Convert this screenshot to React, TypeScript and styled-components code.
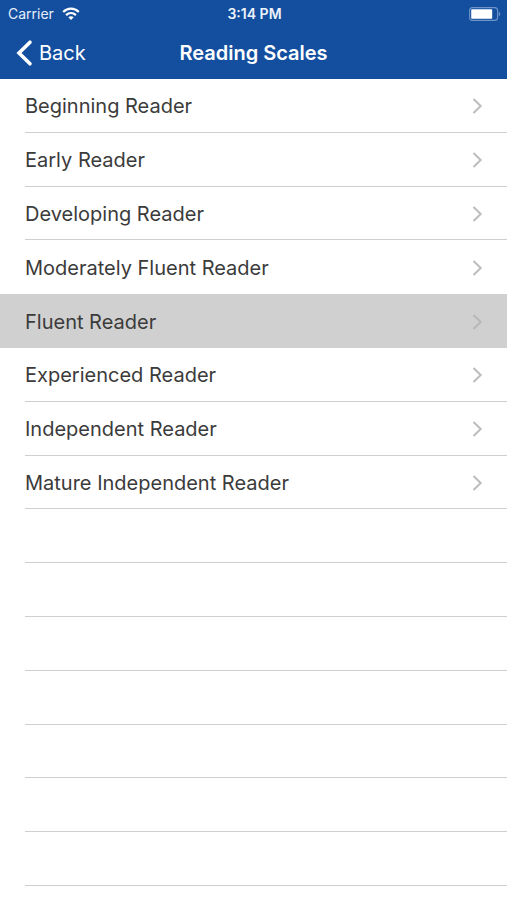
import React from "react";
import styled, { createGlobalStyle } from "styled-components";

const GlobalStyle = createGlobalStyle`
  *, *::before, *::after { box-sizing: border-box; }
  body { margin: 0; background: #fff; font-family: Inter, "Liberation Sans", sans-serif; }
`;

const Screen = styled.div`
  min-height: 100vh;
  display: flex;
  flex-direction: column;
`;

const Header = styled.header`
  flex: none;
  background: #144f9f;
  color: #fff;
`;

const StatusBar = styled.div`
  display: grid;
  grid-template-columns: 1fr auto 1fr;
  align-items: center;
  height: 27px;
  padding: 0 6px 0 8px;
  font-size: 14px;
`;

const Carrier = styled.div`
  display: flex;
  align-items: center;
  gap: 8px;
  color: #e6eefa;
`;

const Clock = styled.span`
  font-weight: 600;
  color: #eef3fb;
`;

const Battery = styled.svg`
  justify-self: end;
`;

const NavBar = styled.nav`
  display: grid;
  grid-template-columns: 1fr auto 1fr;
  align-items: center;
  height: 52px;
  padding: 0 16px;
`;

const BackButton = styled.button`
  display: flex;
  align-items: center;
  justify-self: start;
  gap: 6px;
  padding: 0;
  border: 0;
  background: none;
  color: inherit;
  font: inherit;
  font-size: 20px;
  cursor: pointer;
`;

const Title = styled.h1`
  margin: 0;
  font-size: 20px;
  font-weight: 600;
`;

const List = styled.ul`
  flex: 1;
  margin: 0;
  padding: 0;
  list-style: none;
  display: grid;
  grid-template-rows: repeat(15, minmax(53px, 1fr)) 14px;
`;

const Row = styled.li<{ $selected: boolean }>`
  display: flex;
  padding-left: 25px;
  background: ${(p) => (p.$selected ? "#d0d0d0" : "#fff")};
`;

const RowButton = styled.button<{ $divider: boolean }>`
  flex: 1;
  display: flex;
  align-items: center;
  justify-content: space-between;
  padding: 2px 24px 0 0;
  border: 0;
  border-bottom: 1px solid ${(p) => (p.$divider ? "#cfcfd1" : "transparent")};
  background: none;
  color: #3b3b3b;
  font: inherit;
  font-size: 20px;
  text-align: left;
  cursor: pointer;
`;

const EmptyRow = styled.li`
  margin-left: 25px;
  border-bottom: 1px solid #cfcfd1;
`;

const levels = [
  "Beginning Reader",
  "Early Reader",
  "Developing Reader",
  "Moderately Fluent Reader",
  "Fluent Reader",
  "Experienced Reader",
  "Independent Reader",
  "Mature Independent Reader",
];
const selected = levels.indexOf("Fluent Reader");
const emptyRows = [0, 1, 2, 3, 4, 5, 6];

function WifiIcon() {
  return (
    <svg width="18" height="14" viewBox="0 0 18 14" fill="none" stroke="#fff" strokeWidth="2.2" aria-hidden="true">
      <path d="M1.2 5C5.6.5 12.4.5 16.8 5" />
      <path d="M4.1 8.1c2.8-2.8 7-2.8 9.8 0" />
      <path d="M9 13 6.3 10.3c1.6-1.5 3.8-1.5 5.4 0z" fill="#fff" stroke="none" />
    </svg>
  );
}

function BatteryIcon() {
  return (
    <Battery width="32" height="14" viewBox="0 0 32 14" role="img" aria-label="Battery">
      <rect x="0.6" y="0.6" width="28" height="12.8" rx="3" fill="none" stroke="#6e94c8" strokeWidth="1.1" />
      <rect x="2.2" y="2.2" width="21" height="9.6" rx="0.8" fill="#fff" />
      <path d="M29.8 4.8c1.9.7 1.9 3.7 0 4.4z" fill="#6e94c8" />
    </Battery>
  );
}

function Chevron({ color }: { color: string }) {
  return (
    <svg width="11" height="16" viewBox="0 0 11 16" fill="none" stroke={color} strokeWidth="2" aria-hidden="true">
      <path d="m1.5 1 7.2 7-7.2 7" />
    </svg>
  );
}

export default function App() {
  return (
    <Screen>
      <GlobalStyle />
      <Header>
        <StatusBar>
          <Carrier>
            Carrier
            <WifiIcon />
          </Carrier>
          <Clock>3:14 PM</Clock>
          <BatteryIcon />
        </StatusBar>
        <NavBar>
          <BackButton type="button">
            <svg
              width="17"
              height="28"
              viewBox="0 0 17 28"
              fill="none"
              stroke="#fff"
              strokeWidth="3.6"
              strokeLinecap="round"
              aria-hidden="true"
            >
              <path d="M14 3.2 3 14l11 10.8" />
            </svg>
            Back
          </BackButton>
          <Title>Reading Scales</Title>
        </NavBar>
      </Header>
      <List>
        {levels.map((level, i) => (
          <Row key={level} $selected={i === selected}>
            <RowButton type="button" $divider={i !== selected && i !== selected - 1}>
              {level}
              <Chevron color={i === selected ? "#b8b8ba" : "#bdbdc0"} />
            </RowButton>
          </Row>
        ))}
        {emptyRows.map((n) => (
          <EmptyRow key={n} aria-hidden="true" />
        ))}
      </List>
    </Screen>
  );
}
